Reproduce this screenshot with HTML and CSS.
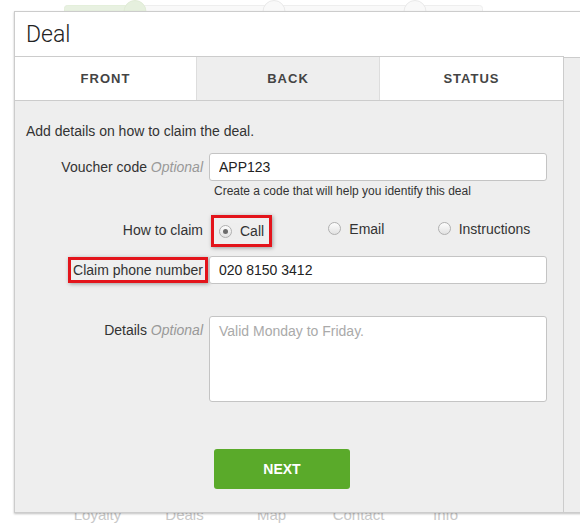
FILE: index.html
```html
<!DOCTYPE html>
<html lang="en">
<head>
  <meta charset="UTF-8">
  <title>Deal</title>
  <link rel="stylesheet" href="styles.css">
</head>
<body>
  <div class="steps">
    <svg width="580" height="11" viewBox="0 0 580 11">
      <rect x="64.5" y="5.5" width="418" height="10" rx="3" fill="#f9f9f9" stroke="#eeeeee"/>
      <rect x="64.5" y="5.5" width="70" height="10" rx="3" fill="#e8f1e1" stroke="#e4efdb"/>
      <circle cx="135" cy="11.5" r="11" fill="#e6f0de" stroke="#e0ebd6"/>
      <circle cx="274" cy="11.5" r="11" fill="#f9f9f9" stroke="#e9e9e9"/>
      <circle cx="415" cy="11.5" r="11" fill="#f9f9f9" stroke="#e9e9e9"/>
    </svg>
  </div>

  <div class="card">
    <div class="card-header">Deal</div>
    <div class="card-body">
      <div class="panel">
        <div class="tabs">
          <div class="tab">Front</div>
          <div class="tab active">Back</div>
          <div class="tab">Status</div>
        </div>
        <div class="panel-body">
          <p class="intro">Add details on how to claim the deal.</p>

          <div class="row row-voucher">
            <label class="row-label" for="voucher">Voucher code <em>Optional</em></label>
            <div class="field">
              <input type="text" id="voucher" value="APP123">
              <div class="help">Create a code that will help you identify this deal</div>
            </div>
          </div>

          <div class="row row-claim">
            <div class="row-label">How to claim</div>
            <div class="field radios">
              <div class="option"><span class="option-inner marked-wide"><span class="radio checked"></span>Call</span></div>
              <div class="option"><span class="option-inner"><span class="radio"></span>Email</span></div>
              <div class="option"><span class="option-inner"><span class="radio"></span>Instructions</span></div>
            </div>
          </div>

          <div class="row row-phone">
            <label class="row-label" for="phone"><span class="marked">Claim phone number</span></label>
            <div class="field">
              <input type="text" id="phone" value="020 8150 3412">
            </div>
          </div>

          <div class="row row-details">
            <label class="row-label" for="details">Details <em>Optional</em></label>
            <div class="field">
              <textarea id="details" placeholder="Valid Monday to Friday."></textarea>
            </div>
          </div>

          <div class="row row-actions">
            <div class="row-label"></div>
            <div class="field">
              <button type="button">NEXT</button>
            </div>
          </div>
        </div>
      </div>
      <div class="preview"></div>
    </div>
  </div>

  <div class="footer-nav">
    <span>Loyalty</span>
    <span>Deals</span>
    <span>Map</span>
    <span>Contact</span>
    <span>Info</span>
  </div>
</body>
</html>
```

FILE: styles.css
```css
body {
  margin: 0;
  font-family: "Liberation Sans", Arial, sans-serif;
  color: #333;
  background: #fff;
  overflow: hidden;
}
.steps {
  height: 11px;
  overflow: hidden;
}
.steps svg {
  display: block;
}
.card {
  position: relative;
  z-index: 1;
  margin-left: 14px;
  width: 620px;
  border: 1px solid #ccc;
  background: #fff;
  box-shadow: 0 1px 2px rgba(0, 0, 0, 0.25);
}
.card-header {
  height: 44px;
  padding-left: 11px;
  font-family: Roboto, "Liberation Sans", sans-serif;
  font-weight: 300;
  font-size: 23px;
  line-height: 46px;
  color: #222;
}
.card-body {
  display: flex;
}
.panel {
  width: 548px;
  border-top: 1px solid #ccc;
  border-right: 1px solid #ccc;
  background: #eee;
}
.preview {
  flex: 1;
  margin-top: 1px;
  border-top: 1px solid #ccc;
  background: #eee;
}
.tabs {
  display: grid;
  grid-template-columns: 181px 183px 1fr;
  border-bottom: 1px solid #ccc;
}
.tab {
  height: 43px;
  line-height: 43px;
  text-align: center;
  background: #fff;
  font-size: 13px;
  font-weight: bold;
  letter-spacing: 1px;
  text-transform: uppercase;
  color: #444;
}
.tab + .tab {
  border-left: 1px solid #ddd;
}
.tab.active {
  background: #eee;
}
.panel-body {
  padding: 22px 16px 23px 11px;
  font-size: 14px;
}
.intro {
  margin: 0;
  line-height: 16px;
}
.row {
  display: flex;
  align-items: flex-start;
  gap: 6px;
}
.row-label {
  width: 177px;
  flex-shrink: 0;
  text-align: right;
  line-height: 16px;
}
.row-label em {
  color: #999;
}
.field {
  width: 338px;
}
input[type="text"],
textarea {
  display: block;
  width: 100%;
  box-sizing: border-box;
  border: 1px solid #c4c4c4;
  border-radius: 3px;
  background: #fff;
  font-family: "Liberation Sans", Arial, sans-serif;
  font-size: 14px;
  color: #222;
  padding: 0 9px;
  margin: 0;
}
input[type="text"] {
  height: 28px;
}
textarea {
  height: 86px;
  padding-top: 6px;
  resize: none;
}
textarea::placeholder {
  color: #aaa;
}
.help {
  margin: 3px 0 0 5px;
  font-size: 12px;
  line-height: 14px;
}
.row-voucher {
  margin-top: 14px;
}
.row-voucher .row-label,
.row-phone .row-label {
  padding-top: 6px;
}
.row-claim {
  margin-top: 19px;
  align-items: center;
  height: 26px;
}
.radios {
  display: flex;
  padding-left: 10px;
  box-sizing: border-box;
}
.option {
  width: 110px;
}
.option-inner {
  display: inline-flex;
  align-items: center;
  gap: 8px;
  line-height: 16px;
}
.radio {
  width: 11px;
  height: 11px;
  border: 1px solid #b0b0b0;
  border-radius: 50%;
  background: linear-gradient(#fdfdfd, #e2e2e2);
  display: flex;
  align-items: center;
  justify-content: center;
}
.radio.checked::after {
  content: "";
  width: 5px;
  height: 5px;
  border-radius: 50%;
  background: #6c6c6c;
}
.marked-wide {
  box-shadow: 0 0 0 5px #efefef, 0 0 0 8px #e3141b, 1px 1px 4px 8px rgba(0, 0, 0, 0.35);
}
.marked {
  display: inline-block;
  background: #efefef;
  box-shadow: 0 0 0 2px #efefef, 0 0 0 5px #e3141b, 1px 1px 4px 5px rgba(0, 0, 0, 0.35);
}
.row-phone {
  margin-top: 13px;
}
.row-details {
  margin-top: 32px;
}
.row-details .row-label {
  padding-top: 6px;
}
.row-actions {
  margin-top: 47px;
}
button {
  margin-left: 5px;
  width: 136px;
  height: 40px;
  border: none;
  border-radius: 3px;
  background: #5aaa2a;
  color: #fff;
  font-family: "Liberation Sans", Arial, sans-serif;
  font-size: 14px;
  font-weight: bold;
  cursor: pointer;
}
.footer-nav {
  display: flex;
  margin-top: -7px;
  padding-left: 54px;
  font-size: 15px;
  line-height: 18px;
  color: #c8c8c8;
}
.footer-nav span {
  width: 87px;
  text-align: center;
}
```
